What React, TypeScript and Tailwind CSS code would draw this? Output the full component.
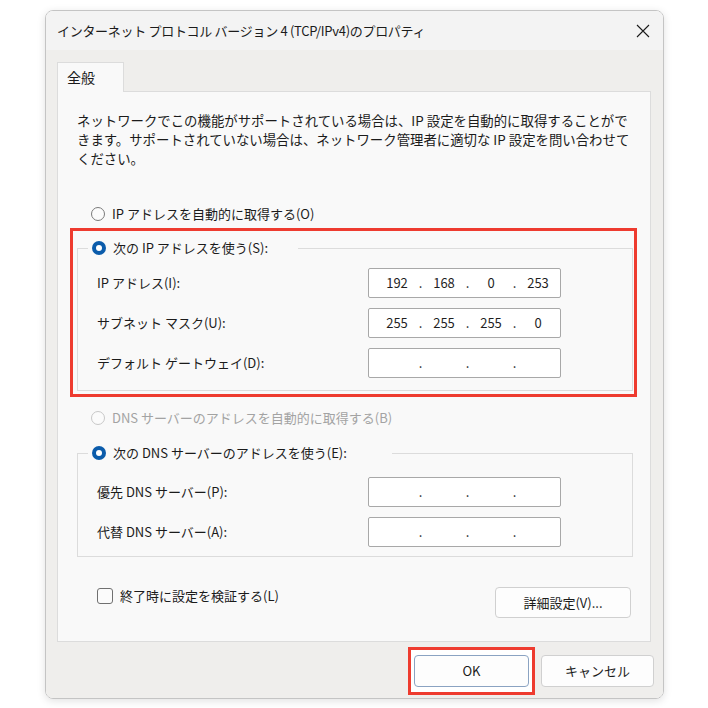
import React from "react"

const ipRow = (parts: string[]) => (
  <div className="flex h-full items-center pl-[8px] text-[13px] text-[#1f1f1f]">
    {parts.map((p, i) => (
      <React.Fragment key={i}>
        <div className="w-[40px] text-center">{p}</div>
        {i < 3 && <div className="w-[7px] text-center">.</div>}
      </React.Fragment>
    ))}
  </div>
)

function IpBox({ parts }: { parts: string[] }) {
  return (
    <div className="h-[30px] w-[193px] rounded-[2px] border border-[#a8a8a8] bg-white">
      {ipRow(parts)}
    </div>
  )
}

function Radio({ checked, disabled }: { checked?: boolean; disabled?: boolean }) {
  if (checked) {
    return (
      <div className="flex h-[14px] w-[14px] items-center justify-center rounded-full bg-[#0b5cab]">
        <div className="h-[6px] w-[6px] rounded-full bg-white" />
      </div>
    )
  }
  return (
    <div
      className={
        disabled
          ? "h-[14px] w-[14px] rounded-full border border-[#c8c8c8] bg-[#fbfbfb]"
          : "h-[14px] w-[14px] rounded-full border border-[#7a7a7a] bg-[#fbfbfb]"
      }
    />
  )
}

function Row({ label, parts, mt }: { label: string; parts: string[]; mt: string }) {
  return (
    <div className={"flex h-[30px] items-center pl-[19px] " + mt}>
      <div className="w-[271px] text-[13px]">{label}</div>
      <IpBox parts={parts} />
    </div>
  )
}

export default function App() {
  return (
    <div className="h-[708px] w-[708px] overflow-hidden bg-white pl-[45px] pt-[10px] font-['Noto_Sans_CJK_JP','Noto_Sans',sans-serif] text-[#1b1b1b]">
      <div className="flex h-[689px] w-[619px] flex-col overflow-hidden rounded-[8px] border border-[#c4c4c4] shadow-[0_2px_8px_rgba(0,0,0,0.12)]">
        {/* title bar */}
        <div className="flex h-[39px] items-center justify-between bg-[#f3f3f3] pl-[11px] pr-[13px]">
          <div className="text-[13px] tracking-[-0.3px]">インターネット プロトコル バージョン 4 (TCP/IPv4)のプロパティ</div>
          <svg width="14" height="14" viewBox="0 0 14 14">
            <path d="M1 1 L13 13 M13 1 L1 13" stroke="#1b1b1b" strokeWidth="1.1" />
          </svg>
        </div>

        <div className="flex flex-1 flex-col bg-[#efeeec] pl-[11px] pr-[12px] pt-[12px]">
          <div className="relative z-10 -mb-px flex h-[30px] w-[67px] items-center border border-b-0 border-[#dcdcdc] bg-[#f9f9f9] pl-[9px] text-[14px]">
            全般
          </div>

          <div className="flex h-[551px] flex-col border border-[#dcdcdc] bg-[#f9f9f9]">
            <div className="whitespace-nowrap pl-[19px] pt-[19px] text-[13.4px] leading-[19px]">
              ネットワークでこの機能がサポートされている場合は、IP 設定を自動的に取得することがで
              <br />
              きます。サポートされていない場合は、ネットワーク管理者に適切な IP 設定を問い合わせて
              <br />
              ください。
            </div>

            <div className="mt-[36px] flex h-[20px] items-center gap-[7px] pl-[33px] text-[13px]">
              <Radio />
              <span>IP アドレスを自動的に取得する(O)</span>
            </div>

            <div className="ml-[12px] mr-[13px] mt-[4px] border-[3px] border-[#ee3b2f] pb-[3px] pl-[4px] pr-[1px] pt-[7px]">
              <fieldset className="border border-[#dcdcdc] pb-[12px]">
                <legend className="ml-[10px] flex h-[20px] w-[210px] items-center gap-[7px] px-[4px] text-[13px]">
                  <Radio checked />
                  <span>次の IP アドレスを使う(S):</span>
                </legend>
                <Row label="IP アドレス(I):" parts={["192", "168", "0", "253"]} mt="mt-[10px]" />
                <Row label="サブネット マスク(U):" parts={["255", "255", "255", "0"]} mt="mt-[10px]" />
                <Row label="デフォルト ゲートウェイ(D):" parts={["", "", "", ""]} mt="mt-[10px]" />
              </fieldset>
            </div>

            <div className="mt-[11px] flex h-[20px] items-center gap-[7px] pl-[33px] text-[13px] text-[#a3a3a3]">
              <Radio disabled />
              <span>DNS サーバーのアドレスを自動的に取得する(B)</span>
            </div>

            <fieldset className="ml-[19px] mr-[17px] mt-[15px] border border-[#dcdcdc] pb-[9px]">
              <legend className="ml-[10px] flex h-[20px] w-[304px] items-center gap-[7px] px-[4px] text-[13px]">
                <Radio checked />
                <span>次の DNS サーバーのアドレスを使う(E):</span>
              </legend>
              <Row label="優先 DNS サーバー(P):" parts={["", "", "", ""]} mt="mt-[14px]" />
              <Row label="代替 DNS サーバー(A):" parts={["", "", "", ""]} mt="mt-[10px]" />
            </fieldset>

            <div className="mt-[30px] flex items-start justify-between pl-[39px] pr-[19px]">
              <div className="mt-[1px] flex items-center gap-[7px] text-[13px] leading-[16px]">
                <div className="h-[16px] w-[16px] rounded-[3px] border border-[#707070] bg-[#fbfbfb]" />
                <span>終了時に設定を検証する(L)</span>
              </div>
              <button className="h-[31px] w-[136px] rounded-[4px] border border-[#d0d0d0] bg-[#fdfdfd] text-[13px]">
                詳細設定(V)...
              </button>
            </div>
          </div>

          <div className="-mr-[3px] flex justify-end gap-[6px] pt-[5px]">
            <div className="border-[3px] border-[#ee3b2f] bg-white px-[3px] py-[5px]">
              <button className="h-[32px] w-[115px] rounded-[4px] border border-[#8ba3c2] bg-[#fdfdfd] text-[13px]">
                OK
              </button>
            </div>
            <button className="mt-[8px] h-[32px] w-[113px] rounded-[4px] border border-[#d0d0d0] bg-[#fdfdfd] text-[13px]">
              キャンセル
            </button>
          </div>
        </div>
      </div>
    </div>
  )
}
